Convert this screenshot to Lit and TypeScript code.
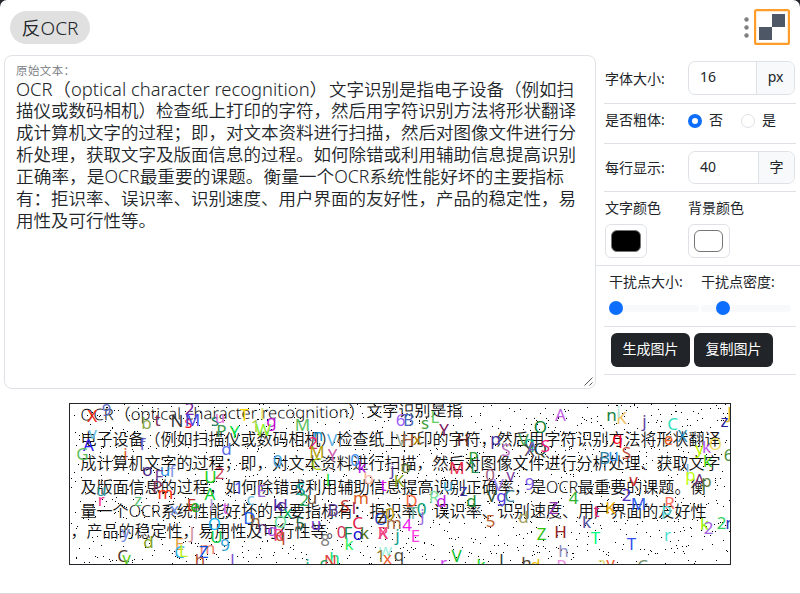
import { LitElement, html, svg, css } from "lit";
import { customElement } from "lit/decorators.js";

type Run = [text: string, x: number, row: number, width: number];
const paragraph: Run[] = [
  ["OCR（optical character recognition）", 0, 0, 312],
  ["文字识别是指电子设备（例如扫", 313, 0, 245],
  ["描仪或数码相机）检查纸上打印的字符，然后用字符识别方法将形状翻译", 0, 1, 560],
  ["成计算机文字的过程；即，对文本资料进行扫描，然后对图像文件进行分", 0, 2, 560],
  ["析处理，获取文字及版面信息的过程。如何除错或利用辅助信息提高识别", 0, 3, 560],
  ["正确率，是OCR最重要的课题。衡量一个OCR系统性能好坏的主要指标", 0, 4, 548],
  ["有：拒识率、误识率、识别速度、用户界面的友好性，产品的稳定性，易", 0, 5, 560],
  ["用性及可行性等。", 0, 6, 140],
];

type Line = [text: string, x: number, y: number, width: number, angle: number];
const outputLines: Line[] = [
  ["OCR（optical character recognition）", 11, 17, 285, -0.6],
  ["文字识别是指", 297, 13.5, 96, -0.6],
  ["电子设备（例如扫描仪或数码相机）检查纸上打印的字符，然后用字符识别方法将形状翻译", 11, 41.500, 640, 0],
  ["成计算机文字的过程；即，对文本资料进行扫描，然后对图像文件进行分析处理、获取文字", 11, 65.500, 640, 0],
  ["及版面信息的过程，如何除错或利用辅助信息提高识别正确率，是OCR最重要的课题。衡", 11, 89.500, 626, 0],
  ["量一个OCR系统性能好坏的主要指标有：拒识率、误识率、识别速度、用户界面的友好性", 11, 113, 626, 0],
  ["，产品的稳定性，易用性及可行性等。", 1, 133, 272, 0],
];

type Glyph = [ch: string, x: number, y: number, color: string];
const glyphs: Glyph[] = [
  ["X", 22.7, 18.7, "#f02818"], ["9", 37, 12, "#5a6cc0"], ["v", 23, 35, "#6ac0e0"], ["A", 19, 47.5, "#2a20f0"],
  ["G", 13, 56, "#5fbf5f"], ["f", 73, 46, "#6a5fd0"], ["b", 77, 25, "#8aa84a"], ["t", 88, 22, "#7a2a55"],
  ["N", 107.5, 23.5, "#333"], ["2", 120, 11, "#7a20a0"], ["s", 119, 24, "#f01020"], ["M", 123, 22, "#4a48e0"],
  ["s", 145.5, 22, "#208060"], ["u", 150.5, 19, "#e070d0"], ["T", 175, 17.5, "#ffd800"], ["l", 193, 16.5, "#d8e060"],
  ["g", 202, 23, "#c010d0"], ["1", 186, 28, "#a0d040"], ["W", 194, 32, "#90f030"], ["P", 152, 33.5, "#3a9a4a"],
  ["Y", 165, 34, "#00e040"], ["d", 157, 51, "#5a70f0"], ["i", 56, 56, "#e06030"], ["o", 78, 72.5, "#402080"],
  ["u", 95.5, 72.5, "#3090e0"], ["f", 103, 73, "#8090e0"], ["F", 89.5, 78.5, "#704090"], ["P", 88, 89, "#80305a"],
  ["m", 96, 95, "#ff3010"], ["U", 141, 79, "#20d020"], ["2", 150, 75.5, "#d04860"], ["0", 208, 63.5, "#40a0e0"],
  ["u", 31.7, 92.7, "#309aa0"], ["r", 31.7, 102.7, "#ff3090"], ["z", 68.5, 102, "#60c070"], ["A", 140.5, 96, "#10d030"],
  ["1", 169, 90, "#5060f0"], ["E", 192, 93.5, "#9a60d0"], ["c", 181, 101, "#70c0e0"], ["E", 122, 107, "#c03020"],
  ["e", 125.5, 108.5, "#20b020"], ["l", 142, 107, "#b0a0e0"], ["t", 156, 110, "#d060e0"], ["x", 105, 111, "#7090e0"],
  ["k", 208, 107, "#4020a0"], ["d", 213, 107, "#5a30a0"], ["x", 218, 114, "#00b060"], ["D", 180, 120, "#2060e0"],
  ["h", 186, 123.5, "#906030"], ["O", 145, 126, "#10b0f0"], ["U", 147, 139, "#10d050"], ["O", 211, 124, "#70e0a0"],
  ["n", 193, 129, "#503070"], ["q", 203, 132, "#a040e0"], ["R", 209, 137, "#ff4080"], ["q", 211, 137, "#c05030"],
  ["J", 122.5, 135, "#d090a0"], ["y", 56, 134, "#8090e0"], ["d", 79, 144, "#80a020"], ["E", 110, 146, "#e0a040"],
  ["C", 110, 154, "#30b0e0"], ["L", 114, 153, "#c0f020"], ["m", 138, 150, "#f08070"], ["Z", 134, 154, "#1050e0"],
  ["9", 155.5, 147.5, "#30a0d0"], ["C", 53, 158.5, "#503a30"], ["v", 57, 160, "#60d020"], ["h", 130.5, 162, "#b05030"],
  ["l", 163, 162, "#8050d0"],
  ["M", 233, 27.5, "#60c060"], ["6", 331, 22.5, "#a060ff"], ["B", 339, 22.5, "#4a68c0"], ["s", 355.5, 25, "#40a040"],
  ["L", 365.5, 19.5, "#60d060"], ["Y", 374.5, 32.5, "#802060"], ["n", 248.5, 37.5, "#1090d0"], ["2", 243.5, 45, "#f02070"],
  ["V", 262.5, 42.5, "#60b0e0"], ["V", 331.5, 42.5, "#90a890"], ["H", 338.5, 42.5, "#a06040"], ["x", 348, 41, "#b08000"],
  ["H", 393.5, 42, "#602020"], ["p", 426, 41, "#4030a0"], ["M", 247.5, 54, "#b0a010"], ["C", 247, 66, "#b0d020"],
  ["Y", 263, 57, "#d060b0"], ["0", 285.5, 62, "#4090f0"], ["k", 292.5, 69, "#b020f0"], ["j", 323, 71, "#6040a0"],
  ["o", 336.5, 69, "#608030"], ["M", 387.5, 70.5, "#f03050"], ["P", 404, 60.5, "#30a030"], ["L", 405, 69.5, "#209050"],
  ["S", 436.5, 52, "#c070c0"], ["0", 420.5, 77.5, "#a06080"], ["V", 429, 87, "#a080f0"], ["l", 258.5, 82.5, "#10e030"],
  ["b", 299, 80, "#f8b8a0"], ["K", 329.5, 83.5, "#80a010"], ["t", 314, 87.5, "#d010f0"], ["u", 378.5, 87.5, "#30a0d0"],
  ["z", 394, 92, "#3030a0"], ["S", 231, 91, "#10b0a0"], ["2", 234.5, 102, "#30b060"], ["u", 242.5, 100, "#705030"],
  ["m", 291.5, 100, "#e06020"], ["D", 342, 103, "#ff6a40"], ["R", 364.5, 99.5, "#80e0a0"], ["d", 372, 103, "#c020e0"],
  ["d", 402, 103, "#209030"], ["V", 422, 98.5, "#305030"], ["g", 432, 98.5, "#5040e0"], ["C", 440, 98, "#3a7a90"],
  ["0", 352, 111, "#10a070"], ["T", 343.5, 115, "#70b0a0"], ["j", 353, 117, "#a070e0"], ["S", 275.5, 108.5, "#c03020"],
  ["B", 263.5, 112.5, "#604090"], ["l", 284.5, 110, "#a02050"], ["O", 311.5, 121, "#2040c0"], ["Z", 312.5, 119, "#503000"],
  ["0", 320.5, 116, "#c0a010"], ["m", 324.5, 125, "#a06840"], ["4", 337.5, 127.5, "#f010f0"], ["C", 288, 125, "#e02050"],
  ["5", 230.5, 125, "#206040"], ["u", 246.5, 126, "#7040d0"], ["0", 272, 134, "#d03060"], ["F", 278.5, 135, "#108040"],
  ["o", 288.5, 136, "#1010d0"], ["k", 295, 135, "#507020"], ["8", 255.5, 142, "#808080"], ["k", 279.5, 146, "#30f060"],
  ["R", 313.5, 135, "#f04080"], ["X", 313.5, 135, "#f04080"], ["j", 328, 137, "#10a090"], ["E", 346, 138.5, "#ff40e0"],
  ["5", 421, 123.5, "#c06030"], ["w", 316, 152, "#a0f0e0"], ["1", 311, 158, "#908030"], ["x", 318, 160.5, "#f06030"],
  ["q", 329.5, 157.5, "#505040"], ["V", 387, 158.5, "#10c030"], ["r", 374, 165, "#d040f0"], ["k", 411.5, 167, "#20e020"],
  ["l", 432, 162, "#304040"], ["h", 265, 160, "#20e080"], ["N", 261, 163, "#e04040"], ["c", 254, 165, "#20a060"],
  ["i", 238, 167, "#20b080"],
  ["A", 491, 17.5, "#c060e0"], ["n", 542, 17, "#208040"], ["K", 552, 20, "#f0c060"], ["i", 549, 14, "#b0e8e0"],
  ["j", 575, 23, "#6040a0"], ["C", 603, 26, "#30e0c0"], ["z", 655, 23.5, "#2020a0"], ["J", 660, 15, "#e0b020"],
  ["O", 471, 29.5, "#108030"], ["X", 613, 38, "#3090c0"], ["e", 599, 41, "#f06020"], ["q", 548, 40, "#ff0020"],
  ["V", 454, 42, "#50a050"], ["q", 460, 44, "#10b080"], ["X", 460, 52, "#504040"], ["A", 463, 50, "#7060c0"],
  ["Q", 471, 51, "#304030"], ["S", 476, 48, "#f02080"], ["B", 535, 60, "#3080a0"], ["u", 544, 57, "#3090f0"],
  ["S", 557, 55, "#c05040"], ["y", 630, 50, "#c0ff00"], ["k", 637, 49, "#c060f0"], ["O", 646, 46, "#f0e060"],
  ["k", 638, 63, "#40d010"], ["6", 659, 57, "#509040"], ["v", 441, 77, "#8040a0"], ["9", 460, 86, "#8060f0"],
  ["l", 618, 72, "#80b0e0"], ["p", 621, 77, "#c0ff10"], ["A", 630, 82, "#703070"], ["p", 637, 83, "#608040"],
  ["v", 564, 82, "#d03030"], ["2", 557, 97, "#5030c0"], ["4", 504, 100, "#30b030"], ["Z", 484, 110, "#9030b0"],
  ["M", 569, 106, "#3060f0"], ["K", 541, 110, "#f0b000"], ["t", 527, 113, "#e02080"], ["R", 600, 105, "#ff7060"],
  ["p", 597, 111, "#60e0e0"], ["d", 454, 119, "#a0a060"], ["k", 517, 124, "#5050a0"], ["Z", 472, 136, "#30c010"],
  ["H", 491, 134, "#902020"], ["T", 526, 140, "#00ff80"], ["T", 562, 146, "#3050f0"], ["r", 598, 137, "#50e0d0"],
  ["k", 635, 126, "#90f000"], ["2", 639, 130, "#a060e0"], ["2", 652, 125, "#30d060"], ["n", 661, 125, "#3030c0"],
  ["h", 494, 153, "#9090c0"], ["h", 457, 165, "#504030"], ["d", 466, 167, "#f0c010"], ["R", 492, 168, "#f090e0"],
  ["a", 532, 165, "#e0e080"], ["v", 541, 165, "#f06030"], ["C", 573, 168, "#709070"],
];

/** One-pixel interference dots from a fixed-seed generator, as a single path. */
function noise(width: number, height: number, count: number): string {
  let seed = 20231;
  const next = () => (seed = (seed * 48271) % 2147483647) / 2147483647;
  let d = "";
  for (let i = 0; i < count; i++) {
    d += `M${Math.floor(next() * width)} ${Math.floor(next() * height)}h1v1h-1z`;
  }
  return d;
}

@customElement("app-root")
export class AppRoot extends LitElement {
  static styles = css`
    :host { display: block; height: 594px; background: #22262b; overflow: hidden;
      font-family: "Noto Sans", "Noto Sans CJK SC", sans-serif; font-size: 14px; color: #212529; }
    * { box-sizing: border-box; }
    .window { height: 594px; background: #fff; border-radius: 7px 7px 0 0; display: flex; flex-direction: column; }
    .top { height: 55px; flex: none; display: flex; justify-content: space-between; padding: 9px 10px 0; }
    .tag { width: 80px; height: 33px; margin-top: 2px; border-radius: 17px; background: #e0e0e0; display: flex;
      align-items: center; justify-content: center; }
    .tag svg, .rows { display: block; }
    .tools { display: flex; gap: 4px; }
    .main { display: flex; height: 334px; flex: none; }
    .area { width: 592px; height: 334px; margin-left: 4px; border: 1px solid #dee2e6; border-radius: 8px;
      padding: 7px 0 0 11px; position: relative; }
    .grip { position: absolute; right: 0; bottom: 0; }
    .side { flex: 1; padding-left: 8px; }
    .row { display: flex; align-items: center; border-bottom: 1px solid #dee2e6; margin-right: 4px; }
    .size { height: 49px; padding-bottom: 2px; }
    .bold { height: 40px; padding-bottom: 9px; }
    .count { height: 48px; padding-bottom: 1px; }
    .label { width: 84px; padding-left: 1px; margin-top: -1px; }
    .group { display: flex; height: 34px; width: 107px; border: 1px solid #dee2e6; border-radius: 7px; overflow: hidden; }
    .value { flex: 1; padding-left: 11px; line-height: 30px; }
    .unit { width: 38px; background: #f8f9fa; border-left: 1px solid #dee2e6; text-align: center; line-height: 30px; }
    .count .group { height: 33px; }
    .count .unit { width: 36px; }
    .radio { width: 14px; height: 14px; border: 1px solid #dee2e6; border-radius: 50%; margin: 4px 7px 0 0; }
    .on { border: 4px solid #0d6efd; }
    .opt { width: 53px; display: flex; align-items: center; }
    .colors { display: grid; grid-template-columns: 83px 1fr; height: 74px; margin-left: -8px; padding: 5px 0 0 9px;
      border-bottom: 1px solid #dee2e6; align-content: start; }
    .t { height: 28px; line-height: 22px; white-space: nowrap; }
    .colors .t { height: 27px; line-height: 21px; }
    .swatch { width: 42px; height: 34px; border: 1px solid #dee2e6; border-radius: 6px; padding: 5px; }
    .chip { height: 22px; width: 29px; border: 1px solid #767676; border-radius: 6px; }
    .black { width: 30px; background: #000; }
    .sliders { display: grid; grid-template-columns: 92px 1fr; height: 61px; border-bottom: 1px solid #dee2e6;
      margin-right: 4px; padding: 5px 0 0 5px; align-content: start; }
    .slider { height: 18px; width: 90px; display: flex; align-items: center; }
    .track { width: 90px; height: 7px; border-radius: 4px; background: #f8f9fa; display: flex; align-items: center; }
    .knob { width: 14px; height: 14px; border-radius: 50%; background: #0d6efd; flex: none; }
    .second { margin-left: 15px; }
    .buttons { display: flex; gap: 4px; height: 48px; border-bottom: 1px solid #dee2e6; margin-right: 4px; padding: 6px 0 0 7px; }
    .btn { width: 79px; height: 34px; background: #212529; color: #fff; border-radius: 6px; line-height: 32px; text-align: center; }
    .picture { display: block; flex: none; margin: 14px 0 0 69px; border: 1px solid #212529; }
    .foot { margin-top: auto; height: 1px; background: #d8d8d8; flex: none; }
    .body { font-weight: 350; }
    .glyph { font-size: 17px; text-anchor: middle; }
  `;

  render() {
    return html`
      <div class="window">
        <div class="top">
          <div class="tag">
            <svg width="60" height="28"><text class="body" x="1.5" y="21" font-size="18" textLength="57" lengthAdjust="spacingAndGlyphs" fill="#212529">反OCR</text></svg>
          </div>
          <div class="tools">
            <svg width="6" height="36" fill="#808080"><circle cx="2.5" cy="10.5" r="2.2"/><circle cx="2.5" cy="18.5" r="2.2"/><circle cx="2.5" cy="26.5" r="2.2"/></svg>
            <svg width="36" height="36"><rect x="1.100" y="1.100" width="33.800" height="33.800" rx="1.5" fill="#fff" stroke="#ff9c2a" stroke-width="2.2"/><path d="M18 5h13v13H18zM5 18h13v13H5z" fill="#4e5765"/></svg>
          </div>
        </div>
        <div class="main">
          <div class="area">
            <svg class="rows" width="572" height="190" fill="#212529">
              <text x="0" y="12" font-size="11.5" fill="#74797e" class="body" textLength="59">原始文本：</text>
              ${paragraph.map(([text, x, row, w]) => svg`<text class="body" x=${x} y=${32.5 + row * 21.9} font-size="17.5" textLength=${w} lengthAdjust="spacingAndGlyphs">${text}</text>`)}
            </svg>
            <svg class="grip" width="12" height="12" stroke="#555" fill="none"><path d="M1.5 9.5l8-8M6.5 9.5l3-3"/></svg>
          </div>
          <div class="side">
            <div class="row size"><div class="label">字体大小:</div><div class="group"><div class="value">16</div><div class="unit">px</div></div></div>
            <div class="row bold"><div class="label">是否粗体:</div>
              <div class="opt"><div class="radio on"></div>否</div><div class="opt"><div class="radio"></div>是</div></div>
            <div class="row count"><div class="label">每行显示:</div><div class="group"><div class="value">40</div><div class="unit">字</div></div></div>
            <div class="colors">
              <div class="t">文字颜色</div><div class="t">背景颜色</div>
              <div class="swatch"><div class="chip black"></div></div><div class="swatch"><div class="chip"></div></div>
            </div>
            <div class="sliders">
              <div class="t">干扰点大小:</div><div class="t">干扰点密度:</div>
              <div class="slider"><div class="track"><div class="knob"></div></div></div>
              <div class="slider"><div class="track"><div class="knob second"></div></div></div>
            </div>
            <div class="buttons"><div class="btn">生成图片</div><div class="btn">复制图片</div></div>
          </div>
        </div>
        <svg class="picture" width="662" height="162" viewBox="0.5 0.5 660 160">
          <g class="body" font-size="16" fill="#111">
            ${outputLines.map(([text, x, y, w, a]) => svg`<text x=${x} y=${y} textLength=${w} lengthAdjust="spacingAndGlyphs" transform="rotate(${a} ${x} ${y})">${text}</text>`)}
          </g>
          <path d=${noise(661, 161, 1400)} fill="#000" shape-rendering="crispEdges"/>
          ${glyphs.map(([ch, x, y, color]) => svg`<text class="glyph" x=${x} y=${y} fill=${color}>${ch}</text>`)}
        </svg>
        <div class="foot"></div>
      </div>
    `;
  }
}
